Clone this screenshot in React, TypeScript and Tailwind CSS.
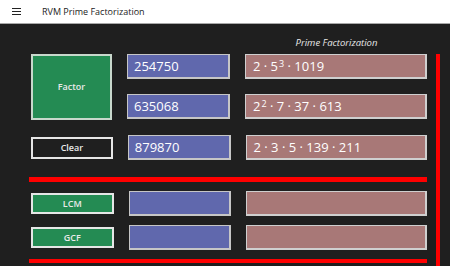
import React from 'react'

const font = { fontFamily: '"Open Sans", "Noto Sans", sans-serif' }

function NumBox({ value }: { value?: string }) {
  return (
    <div className="h-[25px] w-[103px] bg-[#6068ad] border border-[#c6c6c6] border-b-2 border-r-2 pl-[6px] flex items-center text-[13px] text-white leading-none">
      {value}
    </div>
  )
}

function FactorBox({ children }: { children?: React.ReactNode }) {
  return (
    <div className="h-[25px] w-[182px] bg-[#a87877] border border-[#cfcfcf] border-b-2 border-r-2 pl-[7px] flex items-center text-[13px] text-white leading-none whitespace-pre">
      {children}
    </div>
  )
}

function Sup({ n }: { n: string }) {
  return <span className="inline-block text-[9px] leading-none self-start mt-[4px] ml-[1px]">{n}</span>
}

function GreenButton({ label }: { label: string }) {
  return (
    <div className="h-[21px] w-[83px] bg-[#248b53] border-2 border-[#e6e6e6] flex items-center justify-center text-[9px] font-semibold text-[#eaeaea]">
      {label}
    </div>
  )
}

export default function App() {
  return (
    <div className="w-[450px] h-[266px] bg-[#1f1f1f] overflow-hidden" style={font}>
      <div className="h-[24px] bg-white border-b border-[#a8a8a8] flex items-center">
        <div className="ml-[12px] w-[9px] flex flex-col gap-[2px]">
          <div className="h-px bg-[#222]" />
          <div className="h-px bg-[#222]" />
          <div className="h-px bg-[#222]" />
        </div>
        <span className="ml-[21px] text-[9px] text-[#222]">RVM Prime Factorization</span>
      </div>

      <div className="flex pl-[29px]">
        <div className="w-[398px]">
          <div className="h-[30px] flex items-end pb-[4px]">
            <div className="ml-[217px] w-[182px] text-center italic text-[9.5px] text-[#e8e8e8]">
              Prime Factorization
            </div>
          </div>

          <div className="pl-[2px] flex gap-[15px]">
            <div className="h-[66px] w-[82px] bg-[#248b53] border-2 border-[#c8d8cc] flex items-center justify-center text-[9px] font-semibold text-[#eaeaea]">
              Factor
            </div>
            <div className="flex flex-col gap-[15px]">
              <NumBox value="254750" />
              <NumBox value="635068" />
            </div>
            <div className="flex flex-col gap-[15px]">
              <FactorBox>
                <span>2 · 5</span>
                <Sup n="3" />
                <span> · 1019</span>
              </FactorBox>
              <FactorBox>
                <span>2</span>
                <Sup n="2" />
                <span> · 7 · 37 · 613</span>
              </FactorBox>
            </div>
          </div>

          <div className="pl-[2px] mt-[15px] flex gap-[15px] items-center">
            <div className="h-[22px] w-[82px] border-2 border-[#e6e6e6] flex items-center justify-center text-[9px] font-semibold text-[#eaeaea]">
              Clear
            </div>
            <NumBox value="879870" />
            <FactorBox>2 · 3 · 5 · 139 · 211</FactorBox>
          </div>

          <div className="mt-[17px] h-[5px] bg-[#ff0000]" />

          <div className="pl-[2px] mt-[9px] flex flex-col gap-[9px]">
            <div className="flex gap-[15px] items-center">
              <GreenButton label="LCM" />
              <NumBox />
              <FactorBox />
            </div>
            <div className="flex gap-[15px] items-center">
              <GreenButton label="GCF" />
              <NumBox />
              <FactorBox />
            </div>
          </div>

          <div className="mt-[9px] h-[4px] bg-[#ff0000]" />
        </div>

        <div className="ml-[9px] mt-[30px] w-[4px] h-[220px] bg-[#ff0000]" />
      </div>
    </div>
  )
}
